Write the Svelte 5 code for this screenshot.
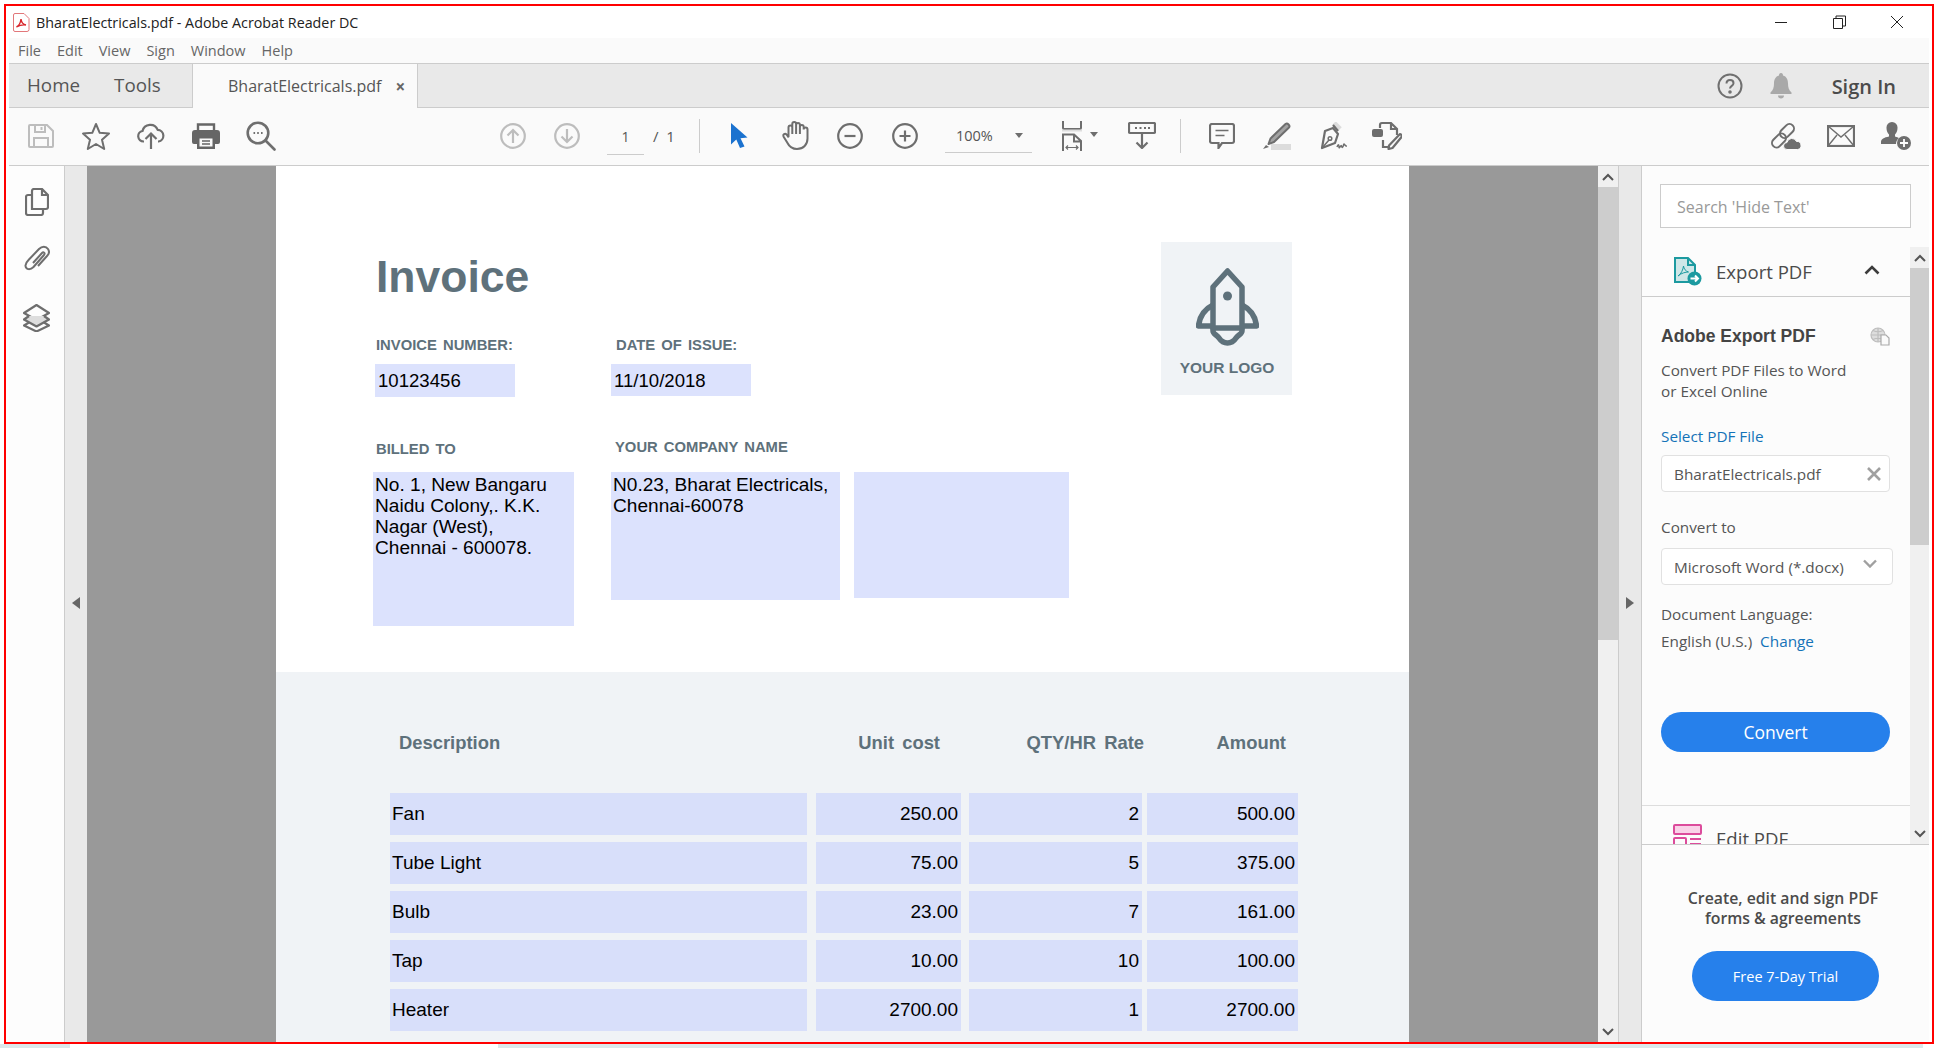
<script>
  const menus = ["File", "Edit", "View", "Sign", "Window", "Help"];
  const lines = [
    { item: "Fan", cost: "250.00", qty: "2", amount: "500.00" },
    { item: "Tube Light", cost: "75.00", qty: "5", amount: "375.00" },
    { item: "Bulb", cost: "23.00", qty: "7", amount: "161.00" },
    { item: "Tap", cost: "10.00", qty: "10", amount: "100.00" },
    { item: "Heater", cost: "2700.00", qty: "1", amount: "2700.00" }
  ];
</script>

<div class="frame">
  <header class="title">
    <svg class="pdf-icon" width="17" height="19" viewBox="0 0 17 19" fill="none" stroke="#d8262c" stroke-width="1">
      <path d="M2 .5h9l5 5v11a2 2 0 0 1-2 2H2a1.5 1.5 0 0 1-1.500-1.500V2A1.500 1.500 0 0 1 2 .5z" fill="#fff" stroke="#e2777a" />
      <path d="M3.500 14c2-1 4-4 4.500-8 .5 4 2.500 5.500 5 6-3-.5-6 0-9.500 2z" stroke-width="1.400" />
    </svg>
    <span>BharatElectricals.pdf - Adobe Acrobat Reader DC</span>
    <div class="controls">
      <svg width="58" height="14" viewBox="0 0 58 14" stroke="#222" fill="none"><path d="M23 7.500h12" /></svg>
      <svg width="58" height="14" viewBox="0 0 58 14" stroke="#222" fill="none"><path d="M23.500 3.500h9v10h-9zM26 3.500V1h9.500v10H33" /></svg>
      <svg width="58" height="14" viewBox="0 0 58 14" stroke="#222" fill="none"><path d="M23 1l12 12M35 1L23 13" /></svg>
    </div>
  </header>

  <div class="shell">
    <nav class="menu">
      {#each menus as m}
        <span>{m}</span>
      {/each}
    </nav>

    <div class="tabs">
      <div class="tab-links">
        <span>Home</span>
        <span>Tools</span>
      </div>
      <div class="tab-doc">
        <span>BharatElectricals.pdf</span>
        <b>×</b>
      </div>
      <div class="tab-right">
        <svg width="26" height="26" viewBox="0 0 26 26" fill="none" stroke="#707070" stroke-width="2">
          <circle cx="13" cy="13" r="11.500" />
          <path d="M9.500 10.500c0-2 1.500-3.500 3.500-3.500s3.500 1.300 3.500 3.200c0 2.800-3.500 2.600-3.500 5.300" />
          <circle cx="13" cy="19" r=".8" fill="#707070" />
        </svg>
        <svg class="bell" width="22" height="26" viewBox="0 0 22 26" fill="#a9a9a9">
          <path d="M11 0c1.500 0 2 1 2 2.500 3.500 1 5 4 5 8 0 4 1 7 3.500 9v1.500H.5V19.500C3 17.500 4 14.500 4 10.500c0-4 1.500-7 5-8C9 1 9.500 0 11 0z" />
          <path d="M8 22.500h6c0 2-1.300 3-3 3s-3-1-3-3z" />
        </svg>
        <span class="sign-in">Sign In</span>
      </div>
    </div>

    <div class="toolbar">
      <span class="tool">
        <svg width="26" height="24" viewBox="0 0 26 24" fill="none" stroke="#bdbdbd" stroke-width="2">
          <path d="M2 1h17l6 6v15a1 1 0 0 1-1 1H2a1 1 0 0 1-1-1V2a1 1 0 0 1 1-1z" />
          <path d="M7 1v7h10V1M6 23V14h14v9" />
          <path d="M13.500 3v3" />
        </svg>
      </span>
      <span class="tool">
        <svg width="30" height="28" viewBox="0 0 30 28" fill="none" stroke="#6e6e6e" stroke-width="2" stroke-linejoin="round">
          <path d="M15 2l3.700 8.800 9.300.8-7 6.200 2.200 9.200L15 22l-8.200 5 2.200-9.200-7-6.200 9.300-.8z" />
        </svg>
      </span>
      <span class="tool">
        <svg width="28" height="26" viewBox="0 0 28 26" fill="none" stroke="#6e6e6e" stroke-width="2.200">
          <path d="M7 18.500H6.500A5.300 5.300 0 0 1 5.500 8 8 8 0 0 1 20.700 6.800 5.900 5.900 0 0 1 21.500 18.500H21" />
          <path d="M14 26V11M8.500 16l5.500-5.500 5.500 5.500" />
        </svg>
      </span>
      <span class="tool">
        <svg width="28" height="26" viewBox="0 0 28 26">
          <path d="M6 8V1.500h16V8" fill="none" stroke="#666" stroke-width="2.400" />
          <path d="M3 7h22a3 3 0 0 1 3 3v9a2 2 0 0 1-2 2h-3v5H5v-5H2a2 2 0 0 1-2-2v-9a3 3 0 0 1 3-3z" fill="#666" />
          <path d="M7.500 15.500h13v8h-13z" fill="#fafafa" />
          <path d="M10 18h8M10 21h8" stroke="#666" stroke-width="1.300" />
        </svg>
      </span>
      <span class="tool">
        <svg width="30" height="30" viewBox="0 0 30 30" fill="none" stroke="#6e6e6e" stroke-width="2.600">
          <circle cx="12" cy="12" r="10.300" />
          <path d="M19.500 19.500l9 9" stroke-linecap="round" />
          <path d="M7.500 12h1.600M11.200 12h1.600M15 12h1.600" stroke-width="2" />
        </svg>
      </span>

      <span class="tool nav-first nav">
        <svg width="26" height="26" viewBox="0 0 26 26" fill="none" stroke="#bdbdbd" stroke-width="2.200">
          <circle cx="13" cy="13" r="11.800" /><path d="M13 20V7M7.500 12.500L13 7l5.500 5.500" />
        </svg>
      </span>
      <span class="tool nav">
        <svg width="26" height="26" viewBox="0 0 26 26" fill="none" stroke="#bdbdbd" stroke-width="2.200">
          <circle cx="13" cy="13" r="11.800" /><path d="M13 6v13M7.500 13.500L13 19l5.500-5.500" />
        </svg>
      </span>
      <span class="page-input">1</span>
      <span class="page-total">/ &nbsp;1</span>
      <i class="sep first"></i>

      <span class="tool">
        <svg width="17" height="25" viewBox="0 0 17 25" fill="#1b72cf">
          <path d="M0 0l16.500 14.500-7 .8 4 8.200-4.500 1.500-3.700-8.500L0 21.500z" />
        </svg>
      </span>
      <span class="tool">
        <svg width="28" height="29" viewBox="0 0 28 29" fill="none" stroke="#6e6e6e" stroke-width="2">
          <path d="M7.500 16V6.500a1.900 1.900 0 0 1 3.800 0V13M11.300 13V3a1.900 1.900 0 0 1 3.800 0v10M15.100 13V4a1.900 1.900 0 0 1 3.800 0v9M18.900 13V6a1.900 1.900 0 0 1 3.800 0 v2.500a1.900 1.900 0 0 1 3.800 0v9c0 6-4 10.500-10.500 10.500-5 0-7.500-2-9.500-6l-4-6.500c-1-2 1.500-3.500 3-2l2.200 3" />
        </svg>
      </span>
      <span class="tool">
        <svg width="26" height="26" viewBox="0 0 26 26" fill="none" stroke="#6e6e6e" stroke-width="2.200">
          <circle cx="13" cy="13" r="11.800" /><path d="M7.500 13h11" />
        </svg>
      </span>
      <span class="tool">
        <svg width="26" height="26" viewBox="0 0 26 26" fill="none" stroke="#6e6e6e" stroke-width="2.200">
          <circle cx="13" cy="13" r="11.800" /><path d="M7.500 13h11M13 7.500v11" />
        </svg>
      </span>

      <div class="zoom-select">
        <span>100%</span>
        <i class="caret"></i>
      </div>

      <svg class="fit" width="22" height="30" viewBox="0 0 22 30" fill="none" stroke="#6e6e6e" stroke-width="2">
        <path d="M2 0v7a1 1 0 0 0 1 1h16a1 1 0 0 0 1-1V0" />
        <path d="M1 9.500h20" stroke="#ddd" />
        <path d="M2 30V13.500h11l7 6.500v10M13 14v6.500h7" />
        <path d="M5 26.500h12M7 24.500l-2 2 2 2M15 24.500l2 2-2 2" stroke-width="1.200" />
      </svg>
      <i class="caret fit-caret"></i>

      <span class="tool read">
        <svg width="28" height="27" viewBox="0 0 28 27" fill="none">
          <rect x="1" y="1" width="26" height="10" rx="1" fill="#fafafa" stroke="#6e6e6e" stroke-width="2.200" />
          <path d="M7 6h2M11.500 6h2M16 6h2M20 6h2" stroke="#6e6e6e" stroke-width="2" />
          <path d="M14 11.500V26M8.500 20.500L14 26l5.500-5.500" stroke="#6e6e6e" stroke-width="2.200" />
        </svg>
      </span>
      <i class="sep second"></i>

      <span class="tool">
        <svg width="26" height="26" viewBox="0 0 26 26" fill="none" stroke="#6e6e6e" stroke-width="2.200">
          <path d="M3 1h20a2 2 0 0 1 2 2v15a2 2 0 0 1-2 2H13l-3.500 5v-5H3a2 2 0 0 1-2-2V3a2 2 0 0 1 2-2z" />
          <path d="M6.500 7.500h13M6.500 12.500h9" stroke-width="1.500" />
        </svg>
      </span>
      <span class="tool">
        <svg width="30" height="28" viewBox="0 0 30 28" fill="none">
          <path d="M9 25h20" stroke="#dcdcdc" stroke-width="6" />
          <path d="M1 27l3-4 3 2z" fill="#6e6e6e" />
          <path d="M23.500 2L8.500 16.500 6.500 22l5.500-2L27 5.500c1.500-2-1.500-5-3.500-3.500z" fill="#a3a3a3" stroke="#6e6e6e" stroke-width="2" stroke-linejoin="round" />
        </svg>
      </span>
      <span class="tool">
        <svg width="30" height="28" viewBox="0 0 30 28" fill="none" stroke="#6e6e6e" stroke-width="2.200">
          <path d="M17 1l6 6" stroke="#dcdcdc" stroke-width="5" />
          <path d="M16 3l5 6" />
          <path d="M8 9l8-3 5 6-3 9-13 5 3-17z" stroke-linejoin="round" />
          <path d="M5 26l7-8" stroke-width="1.500" />
          <circle cx="13" cy="16.500" r="1.800" stroke-width="1.500" />
          <path d="M20 25c1-3 2-3 2 0s2-3 2.500-1 1.500 2 2-1 1.500 2 3.500 1" stroke-width="1.500" />
        </svg>
      </span>
      <span class="tool">
        <svg width="31" height="29" viewBox="0 0 31 29" fill="none" stroke="#6e6e6e" stroke-width="2.200">
          <path d="M9 7V4a2 2 0 0 1 2-2h9l6 6v6M20 2v6h6" />
          <path d="M12 19v7h9" />
          <rect x="1" y="8" width="11" height="8" rx="2" fill="#6e6e6e" stroke="none" />
          <path d="M29 13L18 24.500l-.5 3.500 4-1L30.500 16c.5-1.500-.5-3-1.500-3z" fill="#fafafa" stroke-linejoin="round" />
        </svg>
      </span>

      <div class="tool-right">
        <span class="tool">
          <svg width="31" height="28" viewBox="0 0 31 28" fill="none" stroke="#6e6e6e" stroke-width="2">
            <rect x="1" y="14" width="16" height="9" rx="4.500" transform="rotate(-45 9 18.500)" />
            <rect x="9" y="4.500" width="16" height="9" rx="4.500" transform="rotate(-45 17 9)" />
            <path d="M17 27.500a3.500 3.500 0 0 1 0-7 5 5 0 0 1 9.500-1 4 4 0 0 1 1 8z" fill="#6e6e6e" stroke="#fafafa" stroke-width="1" />
          </svg>
        </span>
        <span class="tool">
          <svg width="28" height="22" viewBox="0 0 28 22" fill="none" stroke="#6e6e6e" stroke-width="2.200">
            <rect x="1" y="1" width="26" height="20" />
            <path d="M1 1l13 11L27 1M1 21l9-11M27 21l-9-11" stroke-width="1.400" />
          </svg>
        </span>
        <span class="tool">
          <svg width="30" height="28" viewBox="0 0 30 28">
            <path d="M11 0a5.500 5.500 0 0 1 5.500 6c0 3-1 5-2.500 6.500v2c2 .5 3 1 4 1.500-2 1.500-3 3.500-3 6H0v-2c0-3 3-4.500 8-5.500v-2C6.500 11 5.500 9 5.500 6A5.500 5.500 0 0 1 11 0z" fill="#6e6e6e" />
            <circle cx="23" cy="21" r="7" fill="#6e6e6e" />
            <path d="M23 17v8M19 21h8" stroke="#fff" stroke-width="1.800" />
          </svg>
        </span>
      </div>
    </div>

    <div class="main">
      <aside class="rail">
        <svg width="24" height="28" viewBox="0 0 24 28" fill="none" stroke="#6e6e6e" stroke-width="2.200">
          <path d="M7 21V3a2 2 0 0 1 2-2h8l6 6v12a2 2 0 0 1-2 2zM17 1v6h6" />
          <path d="M7 7H3a2 2 0 0 0-2 2v16a2 2 0 0 0 2 2h13a2 2 0 0 0 2-2v-4" />
        </svg>
        <svg width="26" height="27" viewBox="0 0 26 27" fill="none" stroke="#6e6e6e" stroke-width="2">
          <path d="M9 18l9-10c1.500-1.500 3.500 0 2 2L9.500 22c-3 3-7.500 3-8-1-.2-2 1-4 3-6L15 4c3-3 7-3 9 0s1 5-1 7l-9 10" />
        </svg>
        <svg class="layers" width="27" height="28" viewBox="0 0 27 28" fill="none" stroke="#6e6e6e" stroke-width="2.200" stroke-linejoin="round">
          <path d="M13.500 1L26 9l-12.500 7L1 9z" />
          <path d="M6 12l-5 3.500 12.500 7 12.500-7-5-3.500" fill="#ddd" />
          <path d="M6 18.500l-5 3 12.500 6 12.500-6-5-3" />
        </svg>
      </aside>

      <div class="strip">
        <i class="arrow-left"></i>
      </div>

      <section class="viewer">
        <article class="page">
          <div class="page-top">
            <div class="form">
              <h1>Invoice</h1>
              <div class="meta">
                <div class="col-a">
                  <h2>INVOICE NUMBER:</h2>
                  <div class="field short">10123456</div>
                </div>
                <div class="col-b">
                  <h2>DATE OF ISSUE:</h2>
                  <div class="field short">11/10/2018</div>
                </div>
              </div>
              <div class="parties">
                <div class="col-a">
                  <h2>BILLED TO</h2>
                  <div class="field billed">No. 1, New Bangaru<br />Naidu Colony,. K.K.<br />Nagar (West),<br />Chennai - 600078.</div>
                </div>
                <div class="col-b">
                  <h2 class="company">YOUR COMPANY NAME</h2>
                  <div class="company-fields">
                    <div class="field company-box">N0.23, Bharat Electricals,<br />Chennai-60078</div>
                    <div class="field extra-box"></div>
                  </div>
                </div>
              </div>
            </div>
            <div class="logo">
              <svg width="63" height="78" viewBox="0 0 63 78" fill="none" stroke="#5e717b" stroke-width="5.500" stroke-linejoin="round">
                <path d="M31.500 3L17 19v41h29V19z" />
                <circle cx="31.500" cy="28" r="4.500" fill="#5e717b" stroke="none" />
                <path d="M17 37C9 41 3.500 48 2.500 58H17M46 37c8 4 13.500 11 14.500 21H46" />
                <path d="M17 60v3c0 3 4 4 6 7 2 3 5 5 8.500 5s6.500-2 8.500-5 6-4 6-7v-3" />
              </svg>
              <span>YOUR LOGO</span>
            </div>
          </div>

          <div class="lines">
            <div class="grid head">
              <span>Description</span>
              <span class="cost-head">Unit cost</span>
              <span class="qty-head">QTY/HR Rate</span>
              <span class="amount-head">Amount</span>
            </div>
            {#each lines as line}
              <div class="grid row">
                <span class="item">{line.item}</span>
                <span>{line.cost}</span>
                <span>{line.qty}</span>
                <span>{line.amount}</span>
              </div>
            {/each}
          </div>
        </article>
      </section>

      <div class="scrollbar">
        <span class="sb-btn"><svg width="12" height="8" viewBox="0 0 12 8" fill="none" stroke="#555" stroke-width="2"><path d="M1 7l5-5 5 5" /></svg></span>
        <i class="thumb doc-thumb"></i>
        <span class="sb-btn end"><svg width="12" height="8" viewBox="0 0 12 8" fill="none" stroke="#555" stroke-width="2"><path d="M1 1l5 5 5-5" /></svg></span>
      </div>

      <div class="strip right-strip">
        <i class="arrow-right"></i>
      </div>

      <aside class="panel">
        <div class="search-wrap">
          <div class="search">Search 'Hide Text'</div>
        </div>

        <div class="panel-scroll">
          <div class="panel-body">
            <div class="acc-head">
              <svg width="28" height="29" viewBox="0 0 28 29" fill="none">
                <path d="M1 1h13l7 7v17H1z" fill="#cfe7e8" stroke="#1c9aa0" stroke-width="2" />
                <path d="M14 1v7h7" stroke="#1c9aa0" stroke-width="2" />
                <path d="M4 19c3-2 5-6 5.500-10 .5 3 2 5 5 6-3 0-7 1-10.500 4z" stroke="#1c9aa0" stroke-width="1" />
                <circle cx="20.500" cy="21.500" r="7" fill="#1c9aa0" />
                <path d="M16.500 21.500h7M21 18.500l3 3-3 3" stroke="#fff" stroke-width="2" />
              </svg>
              <span>Export PDF</span>
              <svg class="chev" width="16" height="10" viewBox="0 0 16 10" fill="none" stroke="#3c3c3c" stroke-width="2.600"><path d="M1.500 8.500L8 2l6.500 6.500" /></svg>
            </div>

            <div class="export">
              <div class="export-title">
                <strong>Adobe Export PDF</strong>
                <svg width="20" height="19" viewBox="0 0 20 19" fill="none" stroke="#bdbdbd" stroke-width="1.200">
                  <circle cx="8" cy="8" r="7" fill="#ddd" />
                  <path d="M1 8h14M8 1v14M3 3.500c3 1.500 7 1.500 10 0M3 12.500c3-1.500 7-1.500 10 0" />
                  <path d="M11 8h5l3 3v7h-8z" fill="#fafafa" stroke="#aaa" />
                </svg>
              </div>
              <p class="blurb">Convert PDF Files to Word<br />or Excel Online</p>
              <div class="link select-label">Select PDF File</div>
              <div class="box file-box">
                <span>BharatElectricals.pdf</span>
                <svg width="14" height="14" viewBox="0 0 14 14" stroke="#a0a0a0" stroke-width="2.600"><path d="M1 1l12 12M13 1L1 13" /></svg>
              </div>
              <div class="convert-label">Convert to</div>
              <div class="box format-box">
                <span>Microsoft Word (*.docx)</span>
                <svg width="14" height="9" viewBox="0 0 14 9" fill="none" stroke="#a0a0a0" stroke-width="2.400"><path d="M1 1.500l6 6 6-6" /></svg>
              </div>
              <div class="lang-label">Document Language:</div>
              <div class="lang">English (U.S.) &nbsp;<span class="link">Change</span></div>
              <div class="btn convert">Convert</div>
            </div>

            <div class="acc-head edit">
              <svg width="30" height="24" viewBox="0 0 30 24" fill="none" stroke="#dc4c9c" stroke-width="2">
                <rect x="1" y="1" width="27" height="9" rx="1" fill="#f9d2e8" />
                <rect x="1" y="14" width="12" height="9" rx="1" />
                <path d="M17 15h11M17 20h11" />
              </svg>
              <span>Edit PDF</span>
            </div>
          </div>

          <div class="scrollbar panel-bar">
            <span class="sb-btn"><svg width="12" height="8" viewBox="0 0 12 8" fill="none" stroke="#555" stroke-width="2"><path d="M1 7l5-5 5 5" /></svg></span>
            <i class="thumb panel-thumb"></i>
            <span class="sb-btn end"><svg width="12" height="8" viewBox="0 0 12 8" fill="none" stroke="#555" stroke-width="2"><path d="M1 1l5 5 5-5" /></svg></span>
          </div>
        </div>

        <div class="promo">
          <p>Create, edit and sign PDF<br />forms &amp; agreements</p>
          <div class="btn trial">Free 7-Day Trial</div>
        </div>
      </aside>
    </div>
  </div>
</div>
<div class="under">
  <i class="under-a"></i>
  <i class="under-b"></i>
  <i class="under-c"></i>
</div>

<style>
  :global(body) {
    margin: 0;
    background: #fff;
    overflow: hidden;
  }
  .frame {
    box-sizing: border-box;
    width: 1930px;
    height: 1040px;
    margin: 4px 4px 0;
    border: 2px solid #f00;
    display: flex;
    flex-direction: column;
    background: #fff;
    font-family: "Open Sans", sans-serif;
    color: #555;
  }
  .title {
    height: 32px;
    flex: none;
    display: flex;
    align-items: center;
    font-size: 14.300px;
    color: #222;
    padding: 0 6px 0 7px;
  }
  .pdf-icon {
    margin-right: 6px;
  }
  .controls {
    margin-left: auto;
    display: flex;
  }
  .shell {
    flex: 1;
    min-height: 0;
    margin: 0 3px;
    display: flex;
    flex-direction: column;
  }
  .menu {
    height: 25px;
    flex: none;
    background: #fafafa;
    border-bottom: 1px solid #ccc;
    display: flex;
    align-items: center;
    gap: 16px;
    padding-left: 9px;
    font-size: 14.500px;
    color: #666;
  }
  .tabs {
    height: 43px;
    flex: none;
    background: #e9e9e9;
    border-bottom: 1px solid #ccc;
    display: flex;
  }
  .tab-links {
    width: 183px;
    box-sizing: border-box;
    padding: 0 0 2px 18px;
    display: flex;
    gap: 34px;
    align-items: center;
    font-size: 18.800px;
    color: #555;
  }
  .tab-doc {
    width: 226px;
    height: 44px;
    box-sizing: border-box;
    background: #fafafa;
    border-left: 1px solid #ccc;
    border-right: 1px solid #ccc;
    padding-left: 35px;
    display: flex;
    align-items: center;
    font-size: 16px;
    color: #555;
  }
  .tab-doc b {
    margin-left: 14px;
    font-size: 17px;
    color: #666;
  }
  .tab-right {
    margin-left: auto;
    display: flex;
    align-items: center;
    padding-right: 33px;
  }
  .bell {
    margin-left: 27px;
  }
  .sign-in {
    margin-left: 40px;
    font-size: 20px;
    font-weight: 600;
    color: #4b4b4b;
    padding-top: 2px;
  }
  .toolbar {
    height: 55px;
    flex: none;
    background: #fafafa;
    border-bottom: 1px solid #ccc;
    display: flex;
    align-items: center;
    padding: 0 0 2px 4px;
  }
  .tool {
    width: 55px;
    flex: none;
    display: flex;
    justify-content: center;
    align-items: center;
  }
  .nav {
    width: 54px;
  }
  .nav-first {
    margin-left: 198px;
  }
  .page-input {
    width: 37px;
    margin-left: 13px;
    text-align: center;
    font-size: 14px;
    line-height: 34px;
    border-bottom: 1px solid #ccc;
    padding-top: 3px;
    color: #555;
  }
  .page-total {
    margin-left: 9px;
    width: 46px;
    font-size: 15px;
    color: #555;
  }
  .sep {
    width: 1px;
    height: 34px;
    background: #ccc;
    flex: none;
  }
  .sep.first {
    margin-right: 12px;
  }
  .zoom-select {
    width: 87px;
    height: 34px;
    margin-left: 13px;
    box-sizing: border-box;
    border-bottom: 1px solid #ccc;
    padding: 0 9px 0 11px;
    display: flex;
    align-items: center;
    justify-content: space-between;
    font-size: 14.500px;
    color: #555;
    flex: none;
  }
  .caret {
    width: 0;
    height: 0;
    border-left: 4.500px solid transparent;
    border-right: 4.500px solid transparent;
    border-top: 5px solid #6e6e6e;
  }
  .fit {
    margin-left: 29px;
  }
  .fit-caret {
    margin-left: 7px;
    margin-top: -2px;
  }
  .read {
    margin-left: 16px;
  }
  .sep.second {
    margin-left: 11px;
    margin-right: 13px;
  }
  .tool-right {
    margin-left: auto;
    display: flex;
    padding-right: 6px;
  }
  .main {
    flex: 1;
    min-height: 0;
    display: flex;
  }
  .rail {
    width: 55px;
    flex: none;
    background: #fdfdfd;
    border-right: 1px solid #ccc;
    display: flex;
    flex-direction: column;
    align-items: center;
    padding-top: 22px;
    gap: 29px;
  }
  .layers {
    margin-top: 3px;
  }
  .strip {
    width: 22px;
    flex: none;
    background: #e9e9e9;
    display: flex;
    align-items: center;
    justify-content: center;
  }
  .arrow-left,
  .arrow-right {
    width: 0;
    height: 0;
    margin-top: -3px;
    border-top: 6px solid transparent;
    border-bottom: 6px solid transparent;
  }
  .arrow-left {
    border-right: 8px solid #666;
  }
  .arrow-right {
    border-left: 8px solid #666;
  }
  .right-strip {
    border-left: 1px solid #ccc;
    border-right: 1px solid #ccc;
  }
  .viewer {
    width: 1511px;
    flex: none;
    background: #999;
    display: flex;
    justify-content: center;
    overflow: hidden;
  }
  .page {
    width: 1133px;
    flex: none;
    background: #fff;
    color: #000;
    font-family: "Liberation Sans", Arial, sans-serif;
    display: flex;
    flex-direction: column;
  }
  .page-top {
    height: 506px;
    flex: none;
    display: flex;
    justify-content: space-between;
    padding: 0 117px 0 97px;
    box-sizing: border-box;
  }
  h1 {
    margin: 0;
    padding: 86px 0 0 3px;
    font-size: 44.500px;
    line-height: 50px;
    font-weight: 700;
    color: #5e717b;
  }
  h2 {
    margin: 0;
    font-size: 14.800px;
    line-height: 18px;
    font-weight: 700;
    word-spacing: 2px;
    color: #5e717b;
    padding-left: 3px;
  }
  .meta {
    display: flex;
    margin-top: 34px;
  }
  .parties {
    display: flex;
    margin-top: 43px;
  }
  .col-a {
    width: 238px;
  }
  .col-b h2 {
    padding-left: 5px;
  }
  .field {
    background: #dce2fd;
    font-size: 19.100px;
    line-height: 21px;
    color: #000;
  }
  .short {
    width: 140px;
    height: 33px;
    margin-top: 10px;
    margin-left: 2px;
    padding: 2px 0 0 3px;
    box-sizing: border-box;
    line-height: 29px;
    font-size: 18.600px;
  }
  .col-b .short {
    margin-left: 0;
    height: 32px;
  }
  .billed {
    width: 201px;
    height: 154px;
    margin-top: 14px;
    padding: 2px 0 0 2px;
    box-sizing: border-box;
  }
  .col-b .company {
    margin-top: -2px;
    padding-left: 4px;
  }
  .company-fields {
    display: flex;
    margin-top: 16px;
    gap: 14px;
  }
  .company-box {
    width: 229px;
    height: 128px;
    padding: 2px 0 0 2px;
    box-sizing: border-box;
  }
  .extra-box {
    width: 215px;
    height: 126px;
  }
  .logo {
    width: 131px;
    height: 153px;
    margin-top: 76px;
    background: #f0f3f6;
    display: flex;
    flex-direction: column;
    align-items: center;
    padding: 26px 0 0 1px;
    box-sizing: border-box;
    font-size: 15.500px;
    font-weight: 700;
    color: #5e717b;
  }
  .logo span {
    margin-top: 13px;
  }
  .lines {
    flex: 1;
    background: #f0f3f6;
    padding: 60px 0 0 114px;
  }
  .grid {
    display: flex;
  }
  .grid > :nth-child(1) {
    width: 417px;
  }
  .grid > :nth-child(2) {
    width: 145px;
    margin-left: 9px;
  }
  .grid > :nth-child(3) {
    width: 173px;
    margin-left: 8px;
  }
  .grid > :nth-child(4) {
    width: 151px;
    margin-left: 5px;
  }
  .grid > span {
    box-sizing: border-box;
  }
  .head {
    font-size: 18.400px;
    line-height: 21px;
    font-weight: 700;
    color: #5e717b;
    word-spacing: 3px;
    margin-bottom: 40px;
    text-align: right;
  }
  .head > :first-child {
    text-align: left;
    padding-left: 9px;
  }
  .head .cost-head {
    padding-right: 21px;
  }
  .head .qty-head {
    white-space: nowrap;
    width: 175px;
    margin-right: -2px;
  }
  .head .amount-head {
    padding-right: 12px;
  }
  .row {
    height: 42px;
    margin-bottom: 7px;
    font-size: 19px;
    line-height: 42px;
    text-align: right;
  }
  .row span {
    background: #d8dffa;
    padding-right: 3px;
  }
  .row .item {
    text-align: left;
    padding-left: 2px;
  }
  .scrollbar {
    width: 20px;
    flex: none;
    background: #f0f0f0;
    display: flex;
    flex-direction: column;
  }
  .sb-btn {
    height: 21px;
    display: flex;
    align-items: center;
    justify-content: center;
    flex: none;
  }
  .sb-btn.end {
    margin-top: auto;
  }
  .thumb {
    width: 100%;
    background: #cdcdcd;
    flex: none;
  }
  .doc-thumb {
    height: 453px;
  }
  .panel-thumb {
    height: 277px;
  }
  .panel {
    flex: 1;
    min-width: 0;
    display: flex;
    flex-direction: column;
    background: #fcfcfc;
  }
  .search-wrap {
    height: 81px;
    flex: none;
    padding: 18px 18px 0 18px;
    box-sizing: border-box;
  }
  .search {
    height: 44px;
    box-sizing: border-box;
    border: 1px solid #ccc;
    background: #fff;
    padding-left: 16px;
    line-height: 44px;
    font-size: 16px;
    color: #999;
  }
  .panel-scroll {
    height: 597px;
    flex: none;
    display: flex;
    border-bottom: 1px solid #ccc;
  }
  .panel-body {
    flex: 1;
    min-width: 0;
    overflow: hidden;
  }
  .panel-bar {
    width: 19px;
  }
  .acc-head {
    height: 50px;
    box-sizing: border-box;
    border-bottom: 1px solid #ccc;
    display: flex;
    align-items: center;
    padding-left: 32px;
    font-size: 18.600px;
    color: #4b4b4b;
  }
  .acc-head span {
    margin-left: 14px;
  }
  .chev {
    margin-left: 52px;
    margin-top: -4px;
  }
  .export {
    height: 509px;
    box-sizing: border-box;
    padding: 29px 0 0 19px;
    border-bottom: 1px solid #ddd;
    font-size: 15.300px;
    color: #555;
  }
  .export-title {
    display: flex;
    justify-content: space-between;
    align-items: center;
    width: 229px;
    height: 20px;
  }
  .export-title strong {
    font-family: "Liberation Sans", Arial, sans-serif;
    font-size: 17.500px;
    color: #444;
  }
  .blurb {
    margin: 14px 0 0;
    line-height: 21px;
  }
  .link {
    color: #1473b8;
  }
  .select-label {
    margin-top: 24px;
    line-height: 20px;
  }
  .box {
    box-sizing: border-box;
    height: 37px;
    margin-top: 9px;
    border: 1px solid #e1e1e1;
    border-radius: 4px;
    background: #fff;
    display: flex;
    align-items: center;
    justify-content: space-between;
    padding: 0 8px 0 12px;
  }
  .file-box {
    width: 229px;
  }
  .format-box {
    width: 232px;
    margin-top: 11px;
    padding-right: 15px;
  }
  .format-box svg {
    margin-top: -6px;
  }
  .convert-label {
    margin-top: 25px;
    line-height: 20px;
  }
  .lang-label {
    margin-top: 19px;
    line-height: 20px;
  }
  .lang {
    margin-top: 7px;
    line-height: 20px;
  }
  .btn {
    background: #2680eb;
    color: #fff;
    display: flex;
    align-items: center;
    justify-content: center;
  }
  .convert {
    width: 229px;
    height: 40px;
    margin-top: 61px;
    border-radius: 20px;
    font-size: 17.500px;
  }
  .edit {
    padding-left: 31px;
    align-items: flex-start;
    padding-top: 18px;
    overflow: hidden;
    border: 0;
  }
  .edit span {
    margin-left: 13px;
    line-height: 30px;
  }
  .promo {
    flex: 1;
    text-align: center;
    font-size: 15.800px;
    font-weight: 600;
    color: #4b4b4b;
    padding-top: 43px;
    box-sizing: border-box;
  }
  .promo p {
    margin: 0 5px 0 0;
    line-height: 20px;
  }
  .trial {
    width: 187px;
    height: 50px;
    margin: 23px 0 0 50px;
    border-radius: 25px;
    font-size: 14.500px;
    font-weight: 400;
  }
  .under {
    height: 4px;
    display: flex;
  }
  .under-a {
    width: 70px;
    background: #dce8ea;
  }
  .under-b {
    width: 428px;
    background: #fff;
  }
  .under-c {
    width: 1425px;
    background: #dce8ea;
  }
</style>
